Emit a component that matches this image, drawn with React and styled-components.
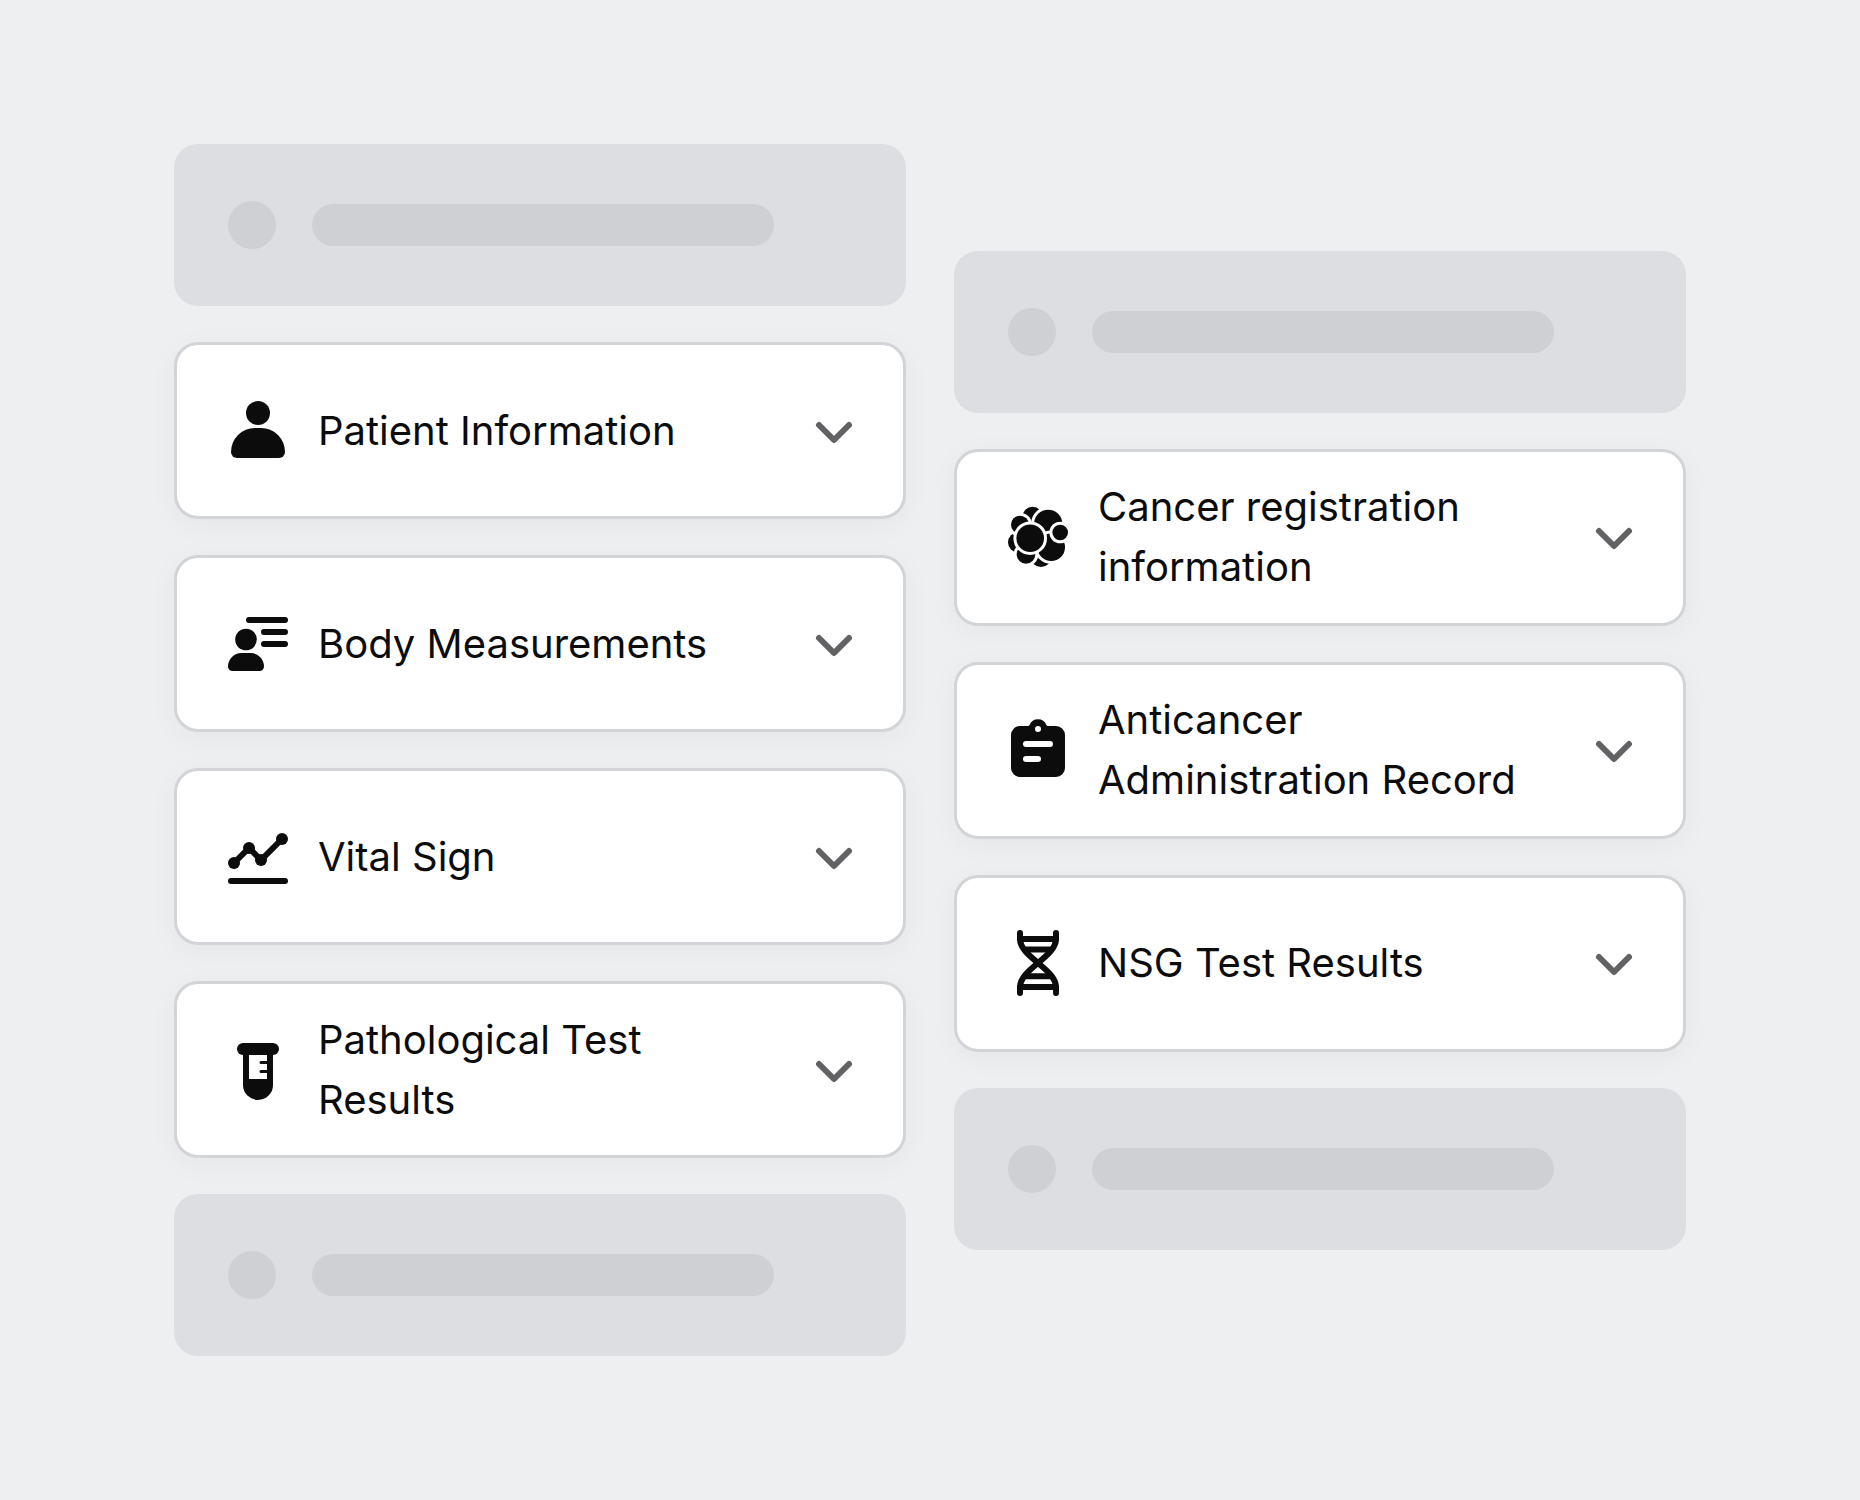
import React, { useState } from 'react';
import styled, { createGlobalStyle } from 'styled-components';

const GlobalStyle = createGlobalStyle`
  * {
    box-sizing: border-box;
  }

  body {
    margin: 0;
    background: #eeeff1;
    color: #0c0c0c;
    font-family: Inter, 'Liberation Sans', sans-serif;
  }
`;

const Page = styled.main`
  display: flex;
  align-items: center;
  gap: 48px;
  min-height: 100vh;
  padding: 144px 174px;

  @media (max-width: 1400px) {
    flex-direction: column;
    align-items: stretch;
    padding: 48px;
  }
`;

const Column = styled.div`
  flex: 1;
  min-width: 0;
  display: flex;
  flex-direction: column;
  gap: 36px;
`;

const SkeletonCard = styled.div`
  display: flex;
  align-items: center;
  gap: 36px;
  height: 162px;
  padding: 0 54px;
  border-radius: 24px;
  background: #dddee2;
`;

const SkeletonDot = styled.span`
  flex: none;
  width: 48px;
  height: 48px;
  border-radius: 50%;
  background: #cfd0d4;
`;

const SkeletonBar = styled.span`
  flex: 0 1 462px;
  height: 42px;
  border-radius: 21px;
  background: #cfd0d4;
`;

const SectionButton = styled.button`
  display: flex;
  align-items: center;
  gap: 24px;
  width: 100%;
  min-height: 177px;
  padding: 24px 33px 24px 45px;
  border: 3px solid #d3d4d8;
  border-radius: 24px;
  background: #ffffff;
  box-shadow: 0 6px 30px rgba(0, 0, 0, 0.04);
  color: inherit;
  font: inherit;
  text-align: left;
  cursor: pointer;
`;

const SectionLabel = styled.span`
  flex: 1;
  font-size: 40px;
  line-height: 60px;
`;

const Icon = styled.svg`
  flex: none;
  width: 72px;
  height: 72px;
  fill: currentColor;
`;

const Chevron = styled(Icon)`
  fill: none;
  stroke: #626265;
  stroke-width: 2;
  stroke-linecap: round;
  stroke-linejoin: round;
  transform: ${props => (props.$open ? 'rotate(180deg)' : 'none')};
`;

const PersonIcon = () => (
  <Icon viewBox="0 0 24 24" aria-hidden="true">
    <circle cx="12" cy="6" r="4" />
    <path d="M3 19a8 8 0 0 1 8-8h2a8 8 0 0 1 8 8a2 2 0 0 1-2 2H5a2 2 0 0 1-2-2z" />
  </Icon>
);

const MeasurementsIcon = () => (
  <Icon viewBox="0 0 24 24" aria-hidden="true">
    <rect x="8" y="3" width="14" height="2" rx="1" />
    <rect x="13" y="7" width="9" height="2" rx="1" />
    <rect x="13" y="11" width="9" height="2" rx="1" />
    <circle cx="8" cy="10.5" r="3.6" />
    <path d="M2 19.5A4.5 4.5 0 0 1 6.5 15h3a4.5 4.5 0 0 1 4.5 4.5a1.5 1.5 0 0 1-1.5 1.5h-9A1.5 1.5 0 0 1 2 19.5z" />
  </Icon>
);

const VitalIcon = () => (
  <Icon viewBox="0 0 24 24" aria-hidden="true">
    <path d="M4 14l5-5l4 4l7-7" fill="none" stroke="currentColor" strokeWidth="2" />
    <circle cx="4" cy="14" r="2" />
    <circle cx="9" cy="9" r="2" />
    <circle cx="13" cy="13" r="2" />
    <circle cx="20" cy="6" r="2" />
    <rect x="2" y="19" width="20" height="2" rx="1" />
  </Icon>
);

const TubeIcon = () => (
  <Icon viewBox="0 0 24 24" aria-hidden="true">
    <rect x="5" y="3" width="14" height="4" rx="2" />
    <path
      fillRule="evenodd"
      d="M7 6h10v11a5 5 0 0 1-10 0zM9 7v8h6v-2h-2a.5.5 0 0 1 0-1h2v-2h-2a.5.5 0 0 1 0-1h2v-2z"
    />
  </Icon>
);

const CellsIcon = () => (
  <Icon viewBox="0 0 24 24" aria-hidden="true" stroke="#ffffff" strokeWidth="2" paintOrder="stroke">
    <circle cx="10.2" cy="5.3" r="3.4" />
    <circle cx="5.4" cy="13.8" r="3.4" />
    <circle cx="13" cy="18.5" r="3.5" />
    <circle cx="15.4" cy="7.6" r="4.7" />
    <circle cx="16.4" cy="15.4" r="4.6" />
    <circle cx="6" cy="7.9" r="3" />
    <circle cx="8" cy="17.8" r="3.1" />
    <circle cx="9.4" cy="12.4" r="4.6" />
    <circle cx="19.4" cy="10.5" r="2.6" />
  </Icon>
);

const ClipboardIcon = () => (
  <Icon viewBox="0 0 24 24" aria-hidden="true">
    <path
      fillRule="evenodd"
      d="M6 4h2.6q.5 0 .6-.3a3 3 0 0 1 5.6 0q.1.3.6.3H18a3 3 0 0 1 3 3v11a3 3 0 0 1-3 3H6a3 3 0 0 1-3-3V7a3 3 0 0 1 3-3zM12 4a1 1 0 0 0 0 2a1 1 0 0 0 0-2zM8 9a1 1 0 0 0 0 2h8a1 1 0 0 0 0-2zM8 14a1 1 0 0 0 0 2h4a1 1 0 0 0 0-2z"
    />
  </Icon>
);

const DnaIcon = () => (
  <Icon viewBox="0 0 24 24" aria-hidden="true">
    <g fill="none" stroke="currentColor" strokeWidth="2" strokeLinecap="round">
      <path d="M6 2v2c0 6 12 10 12 16v2" />
      <path d="M18 2v2c0 6-12 10-12 16v2" />
      <path d="M6 4h12M8 7.5h8M8 16.4h8M6 20h12" />
    </g>
  </Icon>
);

const leftSections = [
  { id: 'patient', label: 'Patient Information', icon: PersonIcon },
  { id: 'body', label: 'Body Measurements', icon: MeasurementsIcon },
  { id: 'vital', label: 'Vital Sign', icon: VitalIcon },
  { id: 'pathology', label: 'Pathological Test Results', icon: TubeIcon }
];

const rightSections = [
  { id: 'cancer', label: 'Cancer registration information', icon: CellsIcon },
  { id: 'anticancer', label: 'Anticancer Administration Record', icon: ClipboardIcon },
  { id: 'nsg', label: 'NSG Test Results', icon: DnaIcon }
];

const Skeleton = () => (
  <SkeletonCard aria-hidden="true">
    <SkeletonDot />
    <SkeletonBar />
  </SkeletonCard>
);

const SectionColumn = ({ sections, openId, onToggle }) => (
  <Column>
    <Skeleton />
    {sections.map(({ id, label, icon: SectionIcon }) => (
      <SectionButton
        key={id}
        type="button"
        aria-expanded={openId === id}
        onClick={() => onToggle(id)}
      >
        <SectionIcon />
        <SectionLabel>{label}</SectionLabel>
        <Chevron viewBox="0 0 24 24" aria-hidden="true" $open={openId === id}>
          <path d="M7 10l5 5l5-5" />
        </Chevron>
      </SectionButton>
    ))}
    <Skeleton />
  </Column>
);

const App = () => {
  const [openId, setOpenId] = useState(null);

  const handleToggle = (id) => {
    setOpenId(openId === id ? null : id);
  };

  return (
    <>
      <GlobalStyle />
      <Page>
        <SectionColumn sections={leftSections} openId={openId} onToggle={handleToggle} />
        <SectionColumn sections={rightSections} openId={openId} onToggle={handleToggle} />
      </Page>
    </>
  );
};

export default App;
